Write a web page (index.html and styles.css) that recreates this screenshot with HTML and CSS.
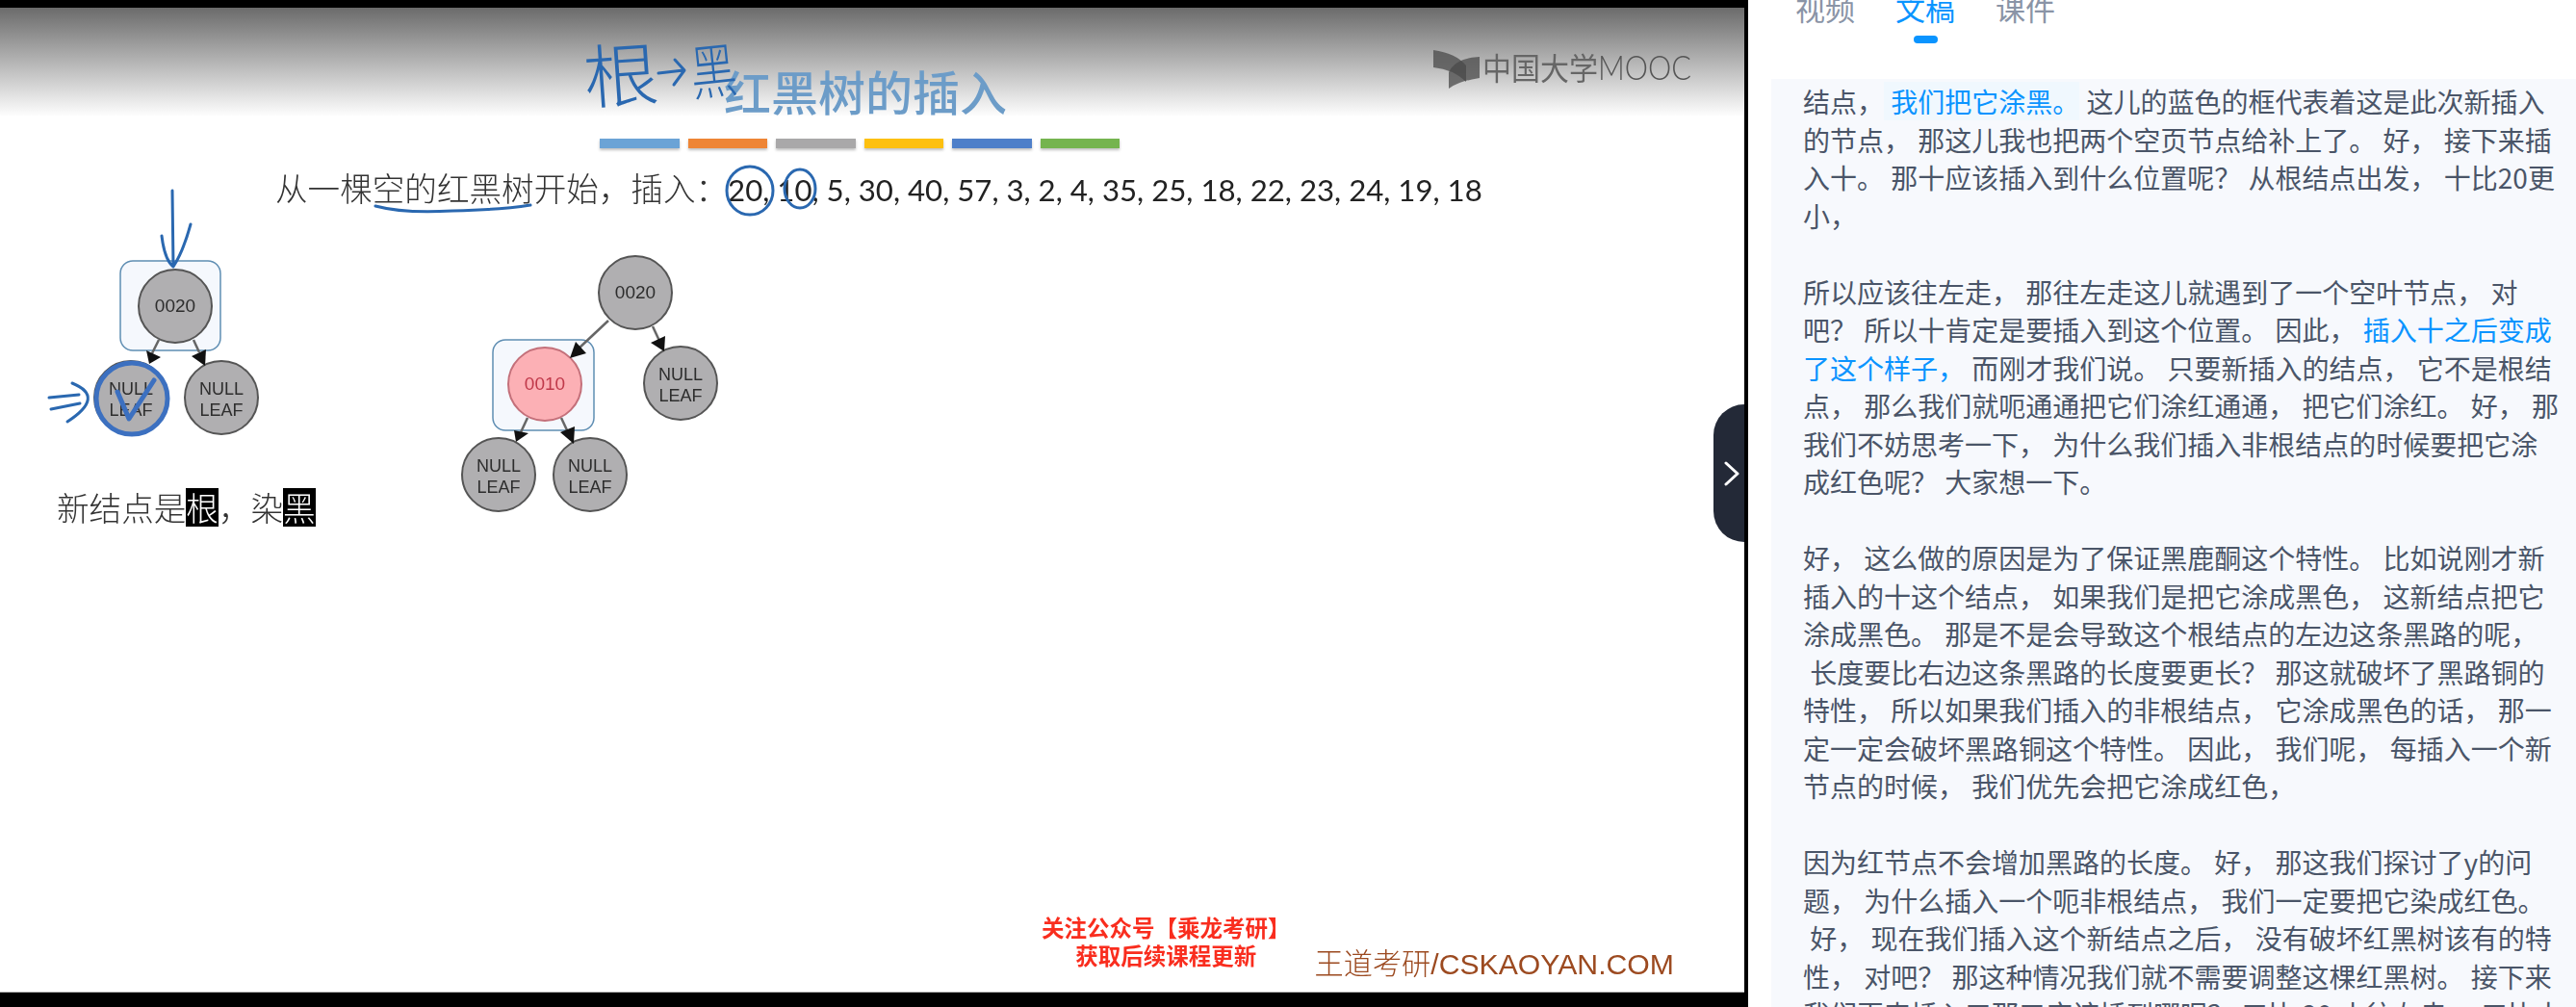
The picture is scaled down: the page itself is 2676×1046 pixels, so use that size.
FILE: index.html
```html
<!DOCTYPE html>
<html lang="zh-CN">
<head>
    <meta charset="UTF-8">
    <title>红黑树的插入</title>
    <link rel="stylesheet" href="styles.css">
</head>
<body>
    <div id="video">
        <div class="slide">
            <h1 class="title">红黑树的插入</h1>
            <div class="bars">
                <span class="bar blue"></span>
                <span class="bar orange"></span>
                <span class="bar grey"></span>
                <span class="bar yellow"></span>
                <span class="bar navy"></span>
                <span class="bar green"></span>
            </div>
            <p class="lead">从一棵空的红黑树开始，插入：<span class="nums">20, 10, 5, 30, 40, 57, 3, 2, 4, 35, 25, 18, 22, 23, 24, 19, 18</span></p>
            <p class="note">新结点是<mark>根</mark>，染<mark>黑</mark></p>
            <div class="slide-foot">
                <div class="promo">关注公众号【乘龙考研】<br>获取后续课程更新</div>
                <div class="brand"><span class="brand-cn">王道考研</span>/CSKAOYAN.COM</div>
            </div>
        </div>

        <svg class="canvas" width="1816" height="1046" viewBox="0 0 1816 1046">
            <!-- mooc logo -->
            <path class="logo-wing" d="M1489 52Q1512 55 1523 68L1523 85Q1510 72 1489 70Z"/>
            <path class="logo-wing" d="M1537 59Q1512 60 1505 75L1505 92Q1516 84 1537 81Z"/>
            <text class="logo-text" x="1540" y="83" textLength="120" lengthAdjust="spacingAndGlyphs">中国大学</text>
            <text class="logo-latin" x="1660" y="83" textLength="97" lengthAdjust="spacingAndGlyphs">MOOC</text>

            <!-- first tree -->
            <rect class="frame" x="125" y="271" width="104" height="93" rx="13"/>
            <line class="edge" x1="165" y1="353" x2="158" y2="367"/>
            <line class="edge" x1="201" y1="353" x2="207" y2="366"/>
            <circle class="node" cx="182" cy="318" r="38"/>
            <text class="label key" x="182" y="324">0020</text>
            <circle class="node" cx="136" cy="413" r="38"/>
            <text class="label" x="136" y="410">NULL</text>
            <text class="label" x="136" y="432">LEAF</text>
            <circle class="node" cx="230" cy="413" r="38"/>
            <text class="label" x="230" y="410">NULL</text>
            <text class="label" x="230" y="432">LEAF</text>
            <polygon class="head" points="152,364 167,371 155,378"/>
            <polygon class="head" points="214,363 199,370 213,380"/>

            <!-- second tree -->
            <rect class="frame" x="512" y="353" width="105" height="94" rx="13"/>
            <line class="edge" x1="632" y1="333" x2="600" y2="363"/>
            <line class="edge" x1="678" y1="339" x2="685" y2="354"/>
            <line class="edge" x1="548" y1="434" x2="541" y2="449"/>
            <line class="edge" x1="583" y1="434" x2="590" y2="449"/>
            <circle class="node" cx="660" cy="304" r="38"/>
            <text class="label key" x="660" y="310">0020</text>
            <circle class="node red" cx="566" cy="399" r="38"/>
            <text class="label key red" x="566" y="405">0010</text>
            <circle class="node" cx="707" cy="398" r="38"/>
            <text class="label" x="707" y="395">NULL</text>
            <text class="label" x="707" y="417">LEAF</text>
            <circle class="node" cx="518" cy="493" r="38"/>
            <text class="label" x="518" y="490">NULL</text>
            <text class="label" x="518" y="512">LEAF</text>
            <circle class="node" cx="613" cy="493" r="38"/>
            <text class="label" x="613" y="490">NULL</text>
            <text class="label" x="613" y="512">LEAF</text>
            <polygon class="head" points="592,372 598,355 609,367"/>
            <polygon class="head" points="690,365 676,356 691,349"/>
            <polygon class="head" points="536,459 534,447 549,450"/>
            <polygon class="head" points="596,461 582,449 597,443"/>

            <!-- pen strokes over the slide -->
            <text class="pen-text" x="606" y="105" textLength="78" lengthAdjust="spacingAndGlyphs" transform="rotate(-4 645 78)">根</text>
            <text class="pen-text small" x="717" y="97" textLength="48" lengthAdjust="spacingAndGlyphs" transform="rotate(-6 741 72)">黑</text>
            <path class="pen" d="M684 76L710 73M701 62L711 73L700 88"/>
            <path class="pen" d="M390 214Q420 222 470 219Q520 218 551 213"/>
            <ellipse class="pen" cx="779" cy="198" rx="24" ry="25"/>
            <ellipse class="pen" cx="831" cy="196" rx="16" ry="20"/>
            <path class="pen" d="M179 198L180 277M168 245Q171 270 180 277Q190 262 198 233"/>
            <circle class="pen bold" cx="137" cy="414" r="37"/>
            <path class="pen bold" d="M122 407L134 435L160 395"/>
            <path class="pen" d="M51 413L82 410M53 425L83 419M75 398Q110 412 70 438"/>
        </svg>

        <button class="collapse">
            <svg width="16" height="26" viewBox="0 0 16 26"><polyline points="2,2 14,13 2,24"/></svg>
        </button>
    </div>

    <div id="panel">
        <div class="tabs">
            <span class="tab">视频</span>
            <span class="tab active">文稿</span>
            <span class="tab">课件</span>
        </div>
        <div class="transcript">
            <p>结点，<span class="hl"> 我们把它涂黑。</span> 这儿的蓝色的框代表着这是此次新插入的节点， 那这儿我也把两个空页节点给补上了。 好， 接下来插入十。 那十应该插入到什么位置呢？ 从根结点出发， 十比20更小，</p>
            <p>所以应该往左走， 那往左走这儿就遇到了一个空叶节点， 对吧？ 所以十肯定是要插入到这个位置。 因此，<span class="hl plain"> 插入十之后变成了这个样子，</span> 而刚才我们说。 只要新插入的结点， 它不是根结点， 那么我们就呃通通把它们涂红通通， 把它们涂红。 好， 那我们不妨思考一下， 为什么我们插入非根结点的时候要把它涂成红色呢？ 大家想一下。</p>
            <p>好， 这么做的原因是为了保证黑鹿酮这个特性。 比如说刚才新插入的十这个结点， 如果我们是把它涂成黑色， 这新结点把它涂成黑色。 那是不是会导致这个根结点的左边这条黑路的呢，<br>&nbsp;长度要比右边这条黑路的长度要更长？ 那这就破坏了黑路铜的特性， 所以如果我们插入的非根结点， 它涂成黑色的话， 那一定一定会破坏黑路铜这个特性。 因此， 我们呢， 每插入一个新节点的时候， 我们优先会把它涂成红色，</p>
            <p>因为红节点不会增加黑路的长度。 好， 那这我们探讨了y的问题， 为什么插入一个呃非根结点， 我们一定要把它染成红色。<br>&nbsp;好， 现在我们插入这个新结点之后， 没有破坏红黑树该有的特性， 对吧？ 那这种情况我们就不需要调整这棵红黑树。 接下来我们再来插入五那五应该插到哪呢？ 五比 20 小往左走， 五比十小</p>
        </div>
    </div>
</body>
</html>
```

FILE: styles.css
```css
html, body {
    margin: 0;
    padding: 0;
    height: 1046px;
    overflow: hidden;
}
body {
    display: flex;
    background-color: white;
    font-family: "Noto Sans CJK SC", "Noto Sans", sans-serif;
}
#video {
    position: relative;
    flex: 0 0 1816px;
    height: 1046px;
    padding: 8px 4px 15px 0;
    box-sizing: border-box;
    background-color: black;
}
.slide {
    display: flex;
    flex-direction: column;
    height: 100%;
    box-sizing: border-box;
    border-bottom: 1px solid #b8b8b8;
    background: linear-gradient(#6b6b6b, #fdfdfd 112px, white 113px);
}
.title {
    margin: 57px 0 0 752px;
    font-size: 49px;
    line-height: 58px;
    font-weight: 500;
    color: #6c9cc8;
    filter: blur(0.5px);
}
.bars {
    display: flex;
    gap: 9px;
    margin: 21px 0 0 623px;
}
.bar {
    width: 82.5px;
    height: 10px;
    box-shadow: 0 2px 3px rgba(0,0,0,0.25);
}
.blue { background-color: #6ba3d6; }
.orange { background-color: #ee8535; }
.grey { background-color: #a9a8a9; }
.yellow { background-color: #fdc010; }
.navy { background-color: #4e7fc9; }
.green { background-color: #75b44f; }
.lead {
    margin: 16px 0 0 286px;
    font-size: 33.6px;
    line-height: 50px;
    font-weight: 300;
    color: #333;
    white-space: nowrap;
    filter: blur(0.4px);
}
.nums {
    font-family: "Lato", sans-serif;
    font-size: 31.2px;
    font-weight: 400;
    color: #222;
}
.note {
    margin: 285px 0 0 59px;
    font-size: 33.6px;
    line-height: 40px;
    font-weight: 300;
    color: #333;
    filter: blur(0.4px);
}
.note mark {
    display: inline-block;
    background-color: black;
    color: white;
}
.slide-foot {
    display: flex;
    align-items: flex-end;
    gap: 25px;
    margin-top: auto;
    padding: 0 0 8px 1082px;
    filter: blur(0.4px);
}
.promo {
    margin-bottom: 15px;
    font-size: 23.5px;
    line-height: 29px;
    font-weight: 700;
    color: #f92d1e;
    text-align: center;
}
.brand {
    font-family: "Liberation Sans", "Noto Sans CJK SC", sans-serif;
    font-size: 30.2px;
    line-height: 40px;
    color: #9c4a20;
    white-space: nowrap;
}
.brand-cn {
    font-weight: 300;
}
.canvas {
    position: absolute;
    top: 0;
    left: 0;
    pointer-events: none;
    filter: blur(0.5px);
}
.logo-wing {
    fill: #4a4a4a;
    opacity: 0.75;
}
.logo-text {
    font-size: 32px;
    font-weight: 400;
    fill: #666;
}
.logo-latin {
    font-family: "Lato", sans-serif;
    font-size: 35px;
    font-weight: 300;
    fill: #555;
}
.frame {
    fill: #f5f8fd;
    stroke: #5f8eb3;
    stroke-width: 1.5;
}
.edge {
    stroke: #666;
    stroke-width: 2.5;
}
.head {
    fill: #111;
}
.node {
    fill: #b0afb1;
    stroke: #555;
    stroke-width: 2;
}
.node.red {
    fill: #fcb0b5;
    stroke: #c4707a;
}
.label {
    font-family: "Liberation Sans", sans-serif;
    font-size: 18px;
    fill: #2d2d2d;
    text-anchor: middle;
}
.label.key {
    font-size: 19px;
}
.label.red {
    fill: #c0394a;
}
.pen {
    fill: none;
    stroke: #2a68b0;
    stroke-width: 3;
    stroke-linecap: round;
    stroke-linejoin: round;
}
.pen.bold {
    stroke: #3c70c0;
    stroke-width: 5;
}
.pen-text {
    font-size: 72px;
    font-weight: 300;
    fill: #2a68b0;
}
.pen-text.small {
    font-size: 62px;
}
.collapse {
    position: absolute;
    top: 420px;
    right: 4px;
    display: flex;
    align-items: center;
    width: 32px;
    height: 143px;
    padding: 0 0 0 11px;
    border: 0;
    box-sizing: border-box;
    border-radius: 32px 0 0 32px;
    background-color: #232937;
}
.collapse polyline {
    fill: none;
    stroke: white;
    stroke-width: 3;
    stroke-linecap: round;
    stroke-linejoin: round;
}
#panel {
    flex: 1;
    min-width: 0;
    height: 1046px;
    overflow: hidden;
}
.tabs {
    display: flex;
    gap: 42px;
    height: 82px;
    padding-left: 49px;
    box-sizing: border-box;
}
.tab {
    margin-top: -14px;
    font-size: 31px;
    line-height: 44px;
    color: #8a94a6;
}
.tab.active {
    color: #0a94ff;
}
.tab.active::after {
    content: "";
    display: block;
    width: 25px;
    height: 8px;
    margin: 7px auto 0;
    border-radius: 4px;
    background-color: #0a94ff;
}
.transcript {
    margin-left: 24px;
    padding: 4px 14px 0 33px;
    height: 964px;
    overflow: hidden;
    background-color: #f7f9fd;
    font-size: 28px;
    line-height: 39.5px;
    word-spacing: 1px;
    color: #4a5568;
}
.transcript p {
    margin: 0 0 39.5px;
}
.hl {
    color: #0a94ff;
    background-color: #f0f8fe;
}
.hl.plain {
    background-color: transparent;
}
```
